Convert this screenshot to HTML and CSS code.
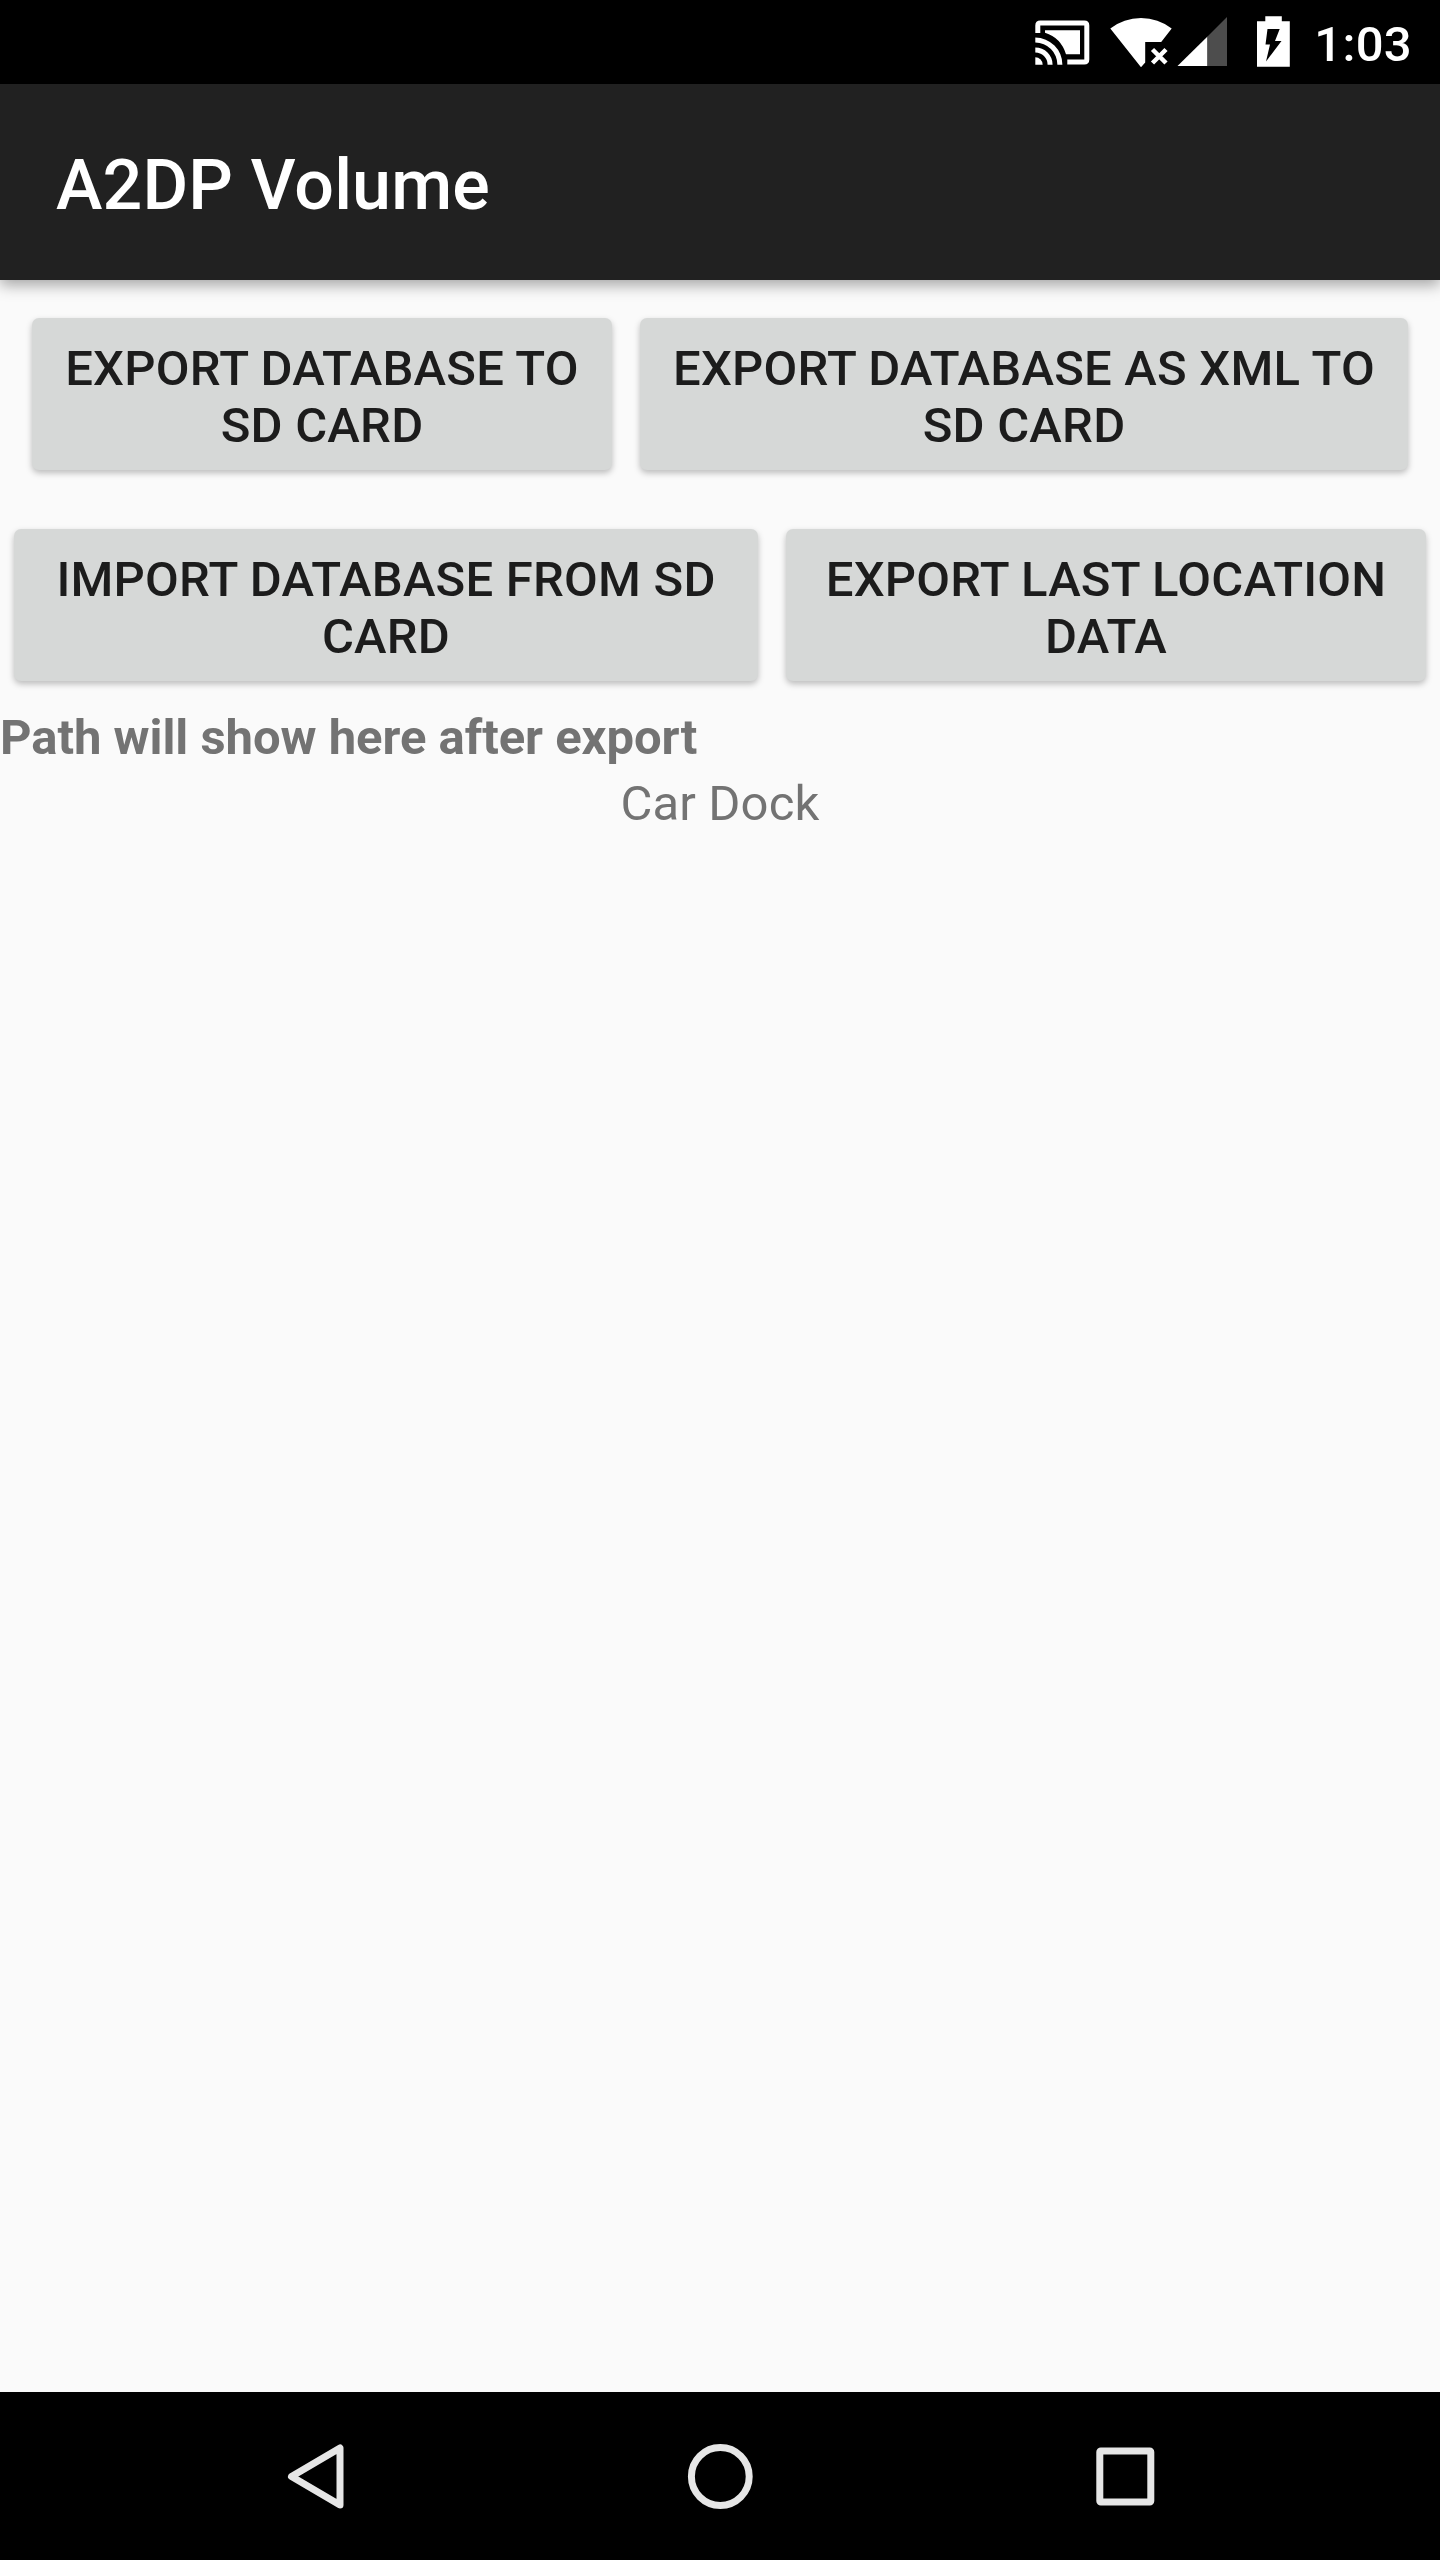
FILE: index.html
```html
<!DOCTYPE html>
<html lang="en">
<head>
<meta charset="utf-8">
<title>A2DP Volume</title>
<link rel="stylesheet" href="styles.css">
</head>
<body>
<div class="screen">
  <header class="status-bar">
    <svg class="status-icons" width="270" height="84" viewBox="1020 0 270 84">
      <g class="white">
        <path d="M1035.300 33v-7.500q0-5 5-5h44q5 0 5 5v34q0 5-5 5h-17v-5h17v-34h-44v7.500z"/>
        <path d="M1045 30.300h35v24h-14q-5-16.500-21-21.500z"/>
        <path d="M1035.300 57.300a7.400 7.400 0 0 1 7.400 7.400h-7.400z"/>
        <path d="M1035.300 47.400a17.300 17.300 0 0 1 17.300 17.300h-5a12.300 12.300 0 0 0-12.300-12.300z"/>
        <path d="M1035.300 37.600a27.100 27.100 0 0 1 27.100 27.100h-5a22.100 22.100 0 0 0-22.100-22.100z"/>
        <path d="M1110.300 28.600q13.500-10.600 30.700-10.600t30.700 10.600l-10.500 13.400h-16v20.500l-4.200 4.800z"/>
        <path class="cross" d="M1152.500 49.500l13.500 13.500m0-13.500l-13.500 13.500"/>
        <path d="M1177.500 66l30-29.500v29.500z"/>
        <path d="M1257 21.300h8.300v-5h16.500v5h8v45.500h-32.800z"/>
      </g>
      <path class="dim" d="M1207.500 36.500l19.500-19.500v49h-19.500z"/>
      <path class="bolt" d="M1267.500 29h12.200l-4.700 12h6.500l-15.500 20.500 4-17h-4.500z"/>
    </svg>
    <span class="clock">1:03</span>
  </header>
  <div class="app-bar"><h1 class="title">A2DP Volume</h1></div>
  <main class="content">
    <div class="row row-export">
      <button class="btn">Export database to<br>SD card</button>
      <button class="btn">Export database as XML to<br>SD card</button>
    </div>
    <div class="row row-import">
      <button class="btn">Import database from SD<br>card</button>
      <button class="btn">Export last location<br>data</button>
    </div>
    <p class="path">Path will show here after export</p>
    <p class="device">Car Dock</p>
  </main>
  <nav class="nav-bar">
    <svg class="nav-icons" width="1440" height="168" viewBox="0 2392 1440 168">
      <path d="M340 2448v57l-48.500-28.500z"/>
      <circle cx="720.300" cy="2476.500" r="28.900"/>
      <rect x="1099.800" y="2451" width="51" height="51" rx="1"/>
    </svg>
  </nav>
</div>
</body>
</html>
```
FILE: styles.css
```css
body {
  margin: 0;
  font-family: Roboto, sans-serif;
}

.screen {
  display: flex;
  flex-direction: column;
  width: 1440px;
  height: 2560px;
  overflow: hidden;
  background: #fafafa;
}

.status-bar {
  display: flex;
  flex: none;
  justify-content: flex-end;
  height: 84px;
  box-sizing: border-box;
  padding-right: 28px;
  background: #000;
  color: #fff;
}

.status-icons {
  flex: none;
}

.white {
  fill: #fff;
}

.cross {
  fill: none;
  stroke: #fff;
  stroke-width: 4.500;
}

.dim {
  fill: #4d4d4d;
}

.bolt {
  fill: #000;
}

.clock {
  width: 122px;
  padding-top: 16px;
  text-align: right;
  font-size: 49px;
  font-weight: 500;
  letter-spacing: 0.300px;
  line-height: 57px;
}

.app-bar {
  flex: none;
  z-index: 1;
  height: 196px;
  box-sizing: border-box;
  padding: 60px 56px 0;
  background: #212121;
  color: #fff;
  box-shadow: 0 5px 14px rgba(0, 0, 0, 0.350);
}

.title {
  margin: 0;
  font-size: 70px;
  font-weight: 500;
  letter-spacing: 0.120px;
  line-height: 82px;
}

.content {
  flex: 1;
  color: #737373;
  font-size: 49px;
  line-height: 57px;
}

.row {
  display: grid;
  column-gap: 28px;
}

.row-export {
  grid-template-columns: 580px 768px;
  padding: 38px 32px 0;
}

.row-import {
  grid-template-columns: 744px 640px;
  padding: 59px 14px 0;
}

.btn {
  height: 152px;
  margin: 0;
  padding: 22px 0 16px;
  border: 0;
  border-radius: 7px;
  background: #d6d8d7;
  color: #1c1c1c;
  box-shadow: 0 3px 6px rgba(0, 0, 0, 0.250);
  font: 500 49px/57px Roboto, sans-serif;
  letter-spacing: 0.220px;
  text-transform: uppercase;
  white-space: nowrap;
}

.path {
  margin: 28px 0 0;
  font-weight: 700;
  letter-spacing: -0.040px;
}

.device {
  margin: 9px 0 0;
  letter-spacing: 0.120px;
  text-align: center;
}

.nav-bar {
  flex: none;
  height: 168px;
  background: #000;
}

.nav-icons {
  display: block;
  fill: none;
  stroke: #e6e6e6;
  stroke-width: 7;
  stroke-linejoin: round;
}
```
